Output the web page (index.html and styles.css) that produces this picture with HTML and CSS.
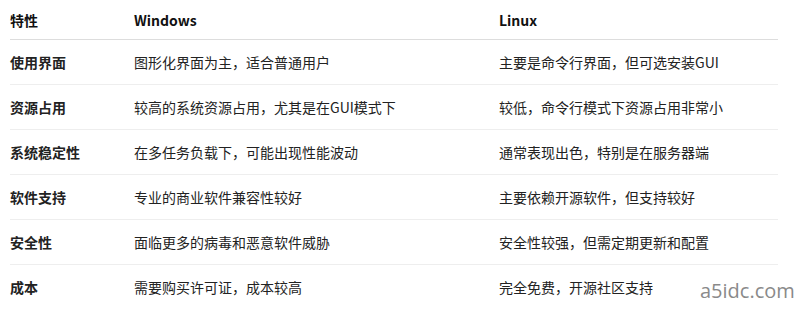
FILE: index.html
```html
<!DOCTYPE html>
<html lang="zh">
<head>
  <meta charset="UTF-8" />
  <title>Windows 与 Linux 对比</title>
  <link rel="stylesheet" href="styles.css">
</head>
<body>
  <div class="cmp-table">
    <div class="cmp-row cmp-head">
      <span>特性</span><span>Windows</span><span>Linux</span>
    </div>
    <div class="cmp-row">
      <span class="cmp-key">使用界面</span><span>图形化界面为主，适合普通用户</span><span>主要是命令行界面，但可选安装GUI</span>
    </div>
    <div class="cmp-row">
      <span class="cmp-key">资源占用</span><span>较高的系统资源占用，尤其是在GUI模式下</span><span>较低，命令行模式下资源占用非常小</span>
    </div>
    <div class="cmp-row">
      <span class="cmp-key">系统稳定性</span><span>在多任务负载下，可能出现性能波动</span><span>通常表现出色，特别是在服务器端</span>
    </div>
    <div class="cmp-row">
      <span class="cmp-key">软件支持</span><span>专业的商业软件兼容性较好</span><span>主要依赖开源软件，但支持较好</span>
    </div>
    <div class="cmp-row">
      <span class="cmp-key">安全性</span><span>面临更多的病毒和恶意软件威胁</span><span>安全性较强，但需定期更新和配置</span>
    </div>
    <div class="cmp-row cmp-last">
      <span class="cmp-key">成本</span><span>需要购买许可证，成本较高</span><span>完全免费，开源社区支持</span>
    </div>
  </div>
  <div class="cmp-mark">a5idc.com</div>
</body>
</html>
```

FILE: styles.css
```css
body {
  margin: 0;
  background: #fff;
  font-family: "Noto Sans CJK SC", "Open Sans", sans-serif;
  font-size: 14px;
  color: #222;
}

.cmp-table {
  width: 768px;
  margin-left: 10px;
}

.cmp-row {
  display: grid;
  grid-template-columns: 124px 365px 1fr;
  align-items: center;
  height: 44px;
  border-bottom: 1px solid #eee;
}

.cmp-head {
  height: 39px;
  border-bottom-color: #ddd;
  font-weight: bold;
  color: #111;
}

.cmp-key {
  font-weight: bold;
}

.cmp-last {
  border-bottom: none;
}

.cmp-mark {
  position: absolute;
  left: 700px;
  top: 277px;
  font-family: "Open Sans", sans-serif;
  font-size: 20px;
  color: #8a8a8a;
}
```
